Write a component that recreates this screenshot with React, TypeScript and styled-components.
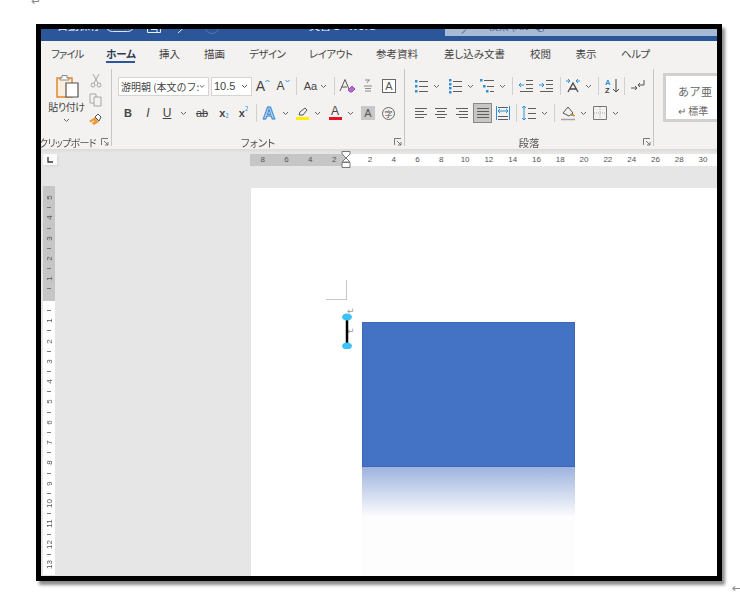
import React from "react";
import styled, { createGlobalStyle } from "styled-components";

const GlobalStyle = createGlobalStyle`
  html, body { margin: 0; padding: 0; background: #fff; }
  body { font-family: "Noto Sans CJK JP", "Liberation Sans", sans-serif; overflow: hidden; }
`;

const BLUE = "#2b579a";
const GREY = "#5f5e5d";
const ACCENT = "#2d8fd8";

const Screen = styled.div`
  width: 740px;
  height: 597px;
  overflow: hidden;
  display: flex;
  flex-direction: column;
`;

const TopMark = styled.div`
  height: 24px;
  flex: none;
  padding-left: 31px;
  overflow: hidden;
  display: flex;
  align-items: flex-start;
`;

const BottomMark = styled.div`
  display: flex;
  justify-content: flex-end;
  padding: 2px 0 0;
  margin-right: -2px;
`;

const Frame = styled.div`
  width: 676px;
  height: 547px;
  margin-left: 36px;
  border: 5px solid #000;
  box-shadow: 3px 4px 3px rgba(0, 0, 0, 0.45);
  display: flex;
  flex-direction: column;
  overflow: hidden;
  background: #e6e6e6;
  flex: none;
`;

const Soft = styled.div`
  filter: blur(0.35px);
  display: flex;
  flex-direction: column;
  height: 100%;
`;

const TitleBar = styled.div`
  height: 12px;
  flex: none;
  background: ${BLUE};
  display: flex;
  align-items: flex-start;
  overflow: hidden;
  color: #e8eef7;
  font-size: 11px;
  line-height: 14px;
`;

const TitleText = styled.span<{ $w: number; $ml: number }>`
  width: ${(p) => p.$w}px;
  margin-left: ${(p) => p.$ml}px;
  flex: none;
  margin-top: -11px;
  white-space: nowrap;
`;

const Toggle = styled.span`
  width: 30px;
  height: 15px;
  flex: none;
  margin-top: -12px;
  border: 1px solid #dfe6f1;
  border-radius: 8px;
  box-sizing: border-box;
`;

const QuickIcon = styled.svg<{ $ml: number }>`
  flex: none;
  margin-left: ${(p) => p.$ml}px;
`;

const SearchBox = styled.div`
  margin-left: auto;
  width: 272px;
  height: 7px;
  flex: none;
  background: #a6b9d5;
  color: #3e5f92;
  display: flex;
  overflow: hidden;
  padding-left: 16px;
  box-sizing: border-box;
  gap: 17px;
  font-size: 10.5px;
  line-height: 12px;
`;

const SearchText = styled.span`
  margin-top: -9px;
  white-space: nowrap;
`;

const Tabs = styled.nav`
  height: 28px;
  flex: none;
  box-sizing: border-box;
  background: #f3f2f1;
  display: flex;
  align-items: center;
  padding: 0 0 2px 10px;
  gap: 24px;
  font-size: 10.5px;
  font-feature-settings: "palt";
  color: #444;
`;

const Tab = styled.span<{ $w: number; $ls?: number; $active?: boolean }>`
  position: relative;
  width: ${(p) => p.$w}px;
  flex: none;
  text-align: center;
  white-space: nowrap;
  line-height: 16px;
  letter-spacing: ${(p) => p.$ls ?? 0}px;
  font-weight: ${(p) => (p.$active ? 700 : 400)};
  color: ${(p) => (p.$active ? "#2b3a55" : "#444")};
  &::after {
    content: "";
    display: ${(p) => (p.$active ? "block" : "none")};
    position: absolute;
    left: 0;
    right: 0;
    bottom: -1px;
    height: 2px;
    background: ${BLUE};
  }
`;

const Ribbon = styled.div`
  height: 80px;
  flex: none;
  background: #f3f2f1;
  display: flex;
`;

const Group = styled.section<{ $w: number; $line?: boolean }>`
  width: ${(p) => p.$w}px;
  flex: none;
  box-sizing: border-box;
  border-right: ${(p) => (p.$line ? "1px solid #c8c6c4" : "none")};
  margin-bottom: 3px;
  display: flex;
  flex-direction: column;
`;

const GroupBody = styled.div`
  flex: 1;
  min-height: 0;
`;

const GroupLabel = styled.div`
  height: 8px;
  flex: none;
  position: relative;
  display: flex;
  align-items: center;
  justify-content: center;
  font-size: 10.5px;
  color: #555;
  font-feature-settings: "palt";
  white-space: nowrap;
`;

const ClipName = styled.span`
  font-size: 10px;
  letter-spacing: -0.7px;
  margin-right: 17px;
`;

const Launcher = styled.svg`
  position: absolute;
  right: 2px;
  top: 0;
`;

const ClipBody = styled(GroupBody)`
  display: flex;
  padding: 4px 0 0 5px;
`;

const PasteCol = styled.div`
  width: 41px;
  display: flex;
  flex-direction: column;
  align-items: center;
  font-size: 10px;
  line-height: 13px;
  color: #444;
  font-feature-settings: "palt";
`;

const PasteLabel = styled.span`
  margin-top: 1px;
  letter-spacing: -0.4px;
  white-space: nowrap;
`;

const SmallCol = styled.div`
  display: flex;
  flex-direction: column;
  align-items: center;
  gap: 5px;
  margin-left: 1px;
`;

const ToolRows = styled(GroupBody)<{ $pl: number }>`
  padding: 7px 0 0 ${(p) => p.$pl}px;
  display: flex;
  flex-direction: column;
  gap: 7px;
`;

const Row = styled.div`
  display: flex;
  align-items: center;
  height: 20px;
`;

const FontBox = styled.div<{ $w: number; $ml?: number }>`
  width: ${(p) => p.$w}px;
  margin-left: ${(p) => p.$ml ?? 0}px;
  height: 19px;
  flex: none;
  box-sizing: border-box;
  background: #fff;
  border: 1px solid #d6d4d2;
  display: flex;
  align-items: center;
  justify-content: space-between;
  padding: 0 3px 0 2px;
  font-size: 10px;
  color: #444;
  overflow: hidden;
  white-space: nowrap;
`;

const FontName = styled.span`
  width: 78px;
  flex: none;
`;

const Tool = styled.div<{ $w: number; $ml?: number; $on?: boolean }>`
  width: ${(p) => p.$w}px;
  margin-left: ${(p) => p.$ml ?? 0}px;
  height: 20px;
  flex: none;
  box-sizing: border-box;
  display: flex;
  align-items: center;
  justify-content: center;
  background: ${(p) => (p.$on ? "#c6c6c6" : "transparent")};
  border: ${(p) => (p.$on ? "1px solid #8a8886" : "none")};
`;

const Glyph = styled.span<{ $size?: number; $color?: string; $bold?: boolean; $italic?: boolean; $under?: boolean; $strike?: boolean }>`
  font-family: "Liberation Sans", sans-serif;
  font-size: ${(p) => p.$size ?? 11}px;
  color: ${(p) => p.$color ?? "#444"};
  font-weight: ${(p) => (p.$bold ? 700 : 400)};
  font-style: ${(p) => (p.$italic ? "italic" : "normal")};
  text-decoration: ${(p) => (p.$under ? "underline" : p.$strike ? "line-through" : "none")};
  line-height: 1;
  white-space: nowrap;
`;

const OutlineA = styled.span`
  font-family: "Liberation Sans", sans-serif;
  font-size: 17px;
  font-weight: 700;
  line-height: 1;
  color: #d6e8f8;
  -webkit-text-stroke: 1px #2d7fd0;
`;

const Sub = styled.span<{ $up?: boolean }>`
  font-size: 6px;
  color: ${ACCENT};
  position: relative;
  top: ${(p) => (p.$up ? -5 : 2)}px;
`;

const Divider = styled.span<{ $l: number; $r: number }>`
  width: 1px;
  height: 18px;
  flex: none;
  background: #d2d0ce;
  margin: 0 ${(p) => p.$r}px 0 ${(p) => p.$l}px;
`;

const LetterBar = styled.span<{ $color: string }>`
  display: flex;
  flex-direction: column;
  align-items: center;
  font-family: "Liberation Sans", sans-serif;
  font-size: 12px;
  line-height: 11px;
  color: #444;
  &::after {
    content: "";
    width: 13px;
    height: 3px;
    background: ${(p) => p.$color};
  }
`;

const GreyA = styled.span`
  width: 14px;
  height: 14px;
  background: #c8c8c8;
  color: #555;
  font-family: "Liberation Sans", sans-serif;
  font-size: 11px;
  display: flex;
  align-items: center;
  justify-content: center;
`;

const BoxA = styled(GreyA)`
  background: #fff;
  border: 1px solid #666;
  box-sizing: border-box;
`;

const CircleChar = styled.span`
  width: 13px;
  height: 13px;
  box-sizing: border-box;
  border: 1px solid #666;
  border-radius: 50%;
  font-size: 8px;
  color: #555;
  display: flex;
  align-items: center;
  justify-content: center;
`;

const StylesBody = styled(GroupBody)`
  padding: 4px 0 0 9px;
  overflow: hidden;
`;

const StyleCard = styled.div`
  width: 70px;
  height: 49px;
  box-sizing: border-box;
  border: 3px solid #d2d0ce;
  background: #fff;
  display: flex;
  flex-direction: column;
  padding-left: 12px;
  color: #666;
  font-size: 10px;
`;

const StyleSample = styled.span`
  margin-top: 7px;
  font-size: 11px;
  line-height: 16px;
  letter-spacing: 0.5px;
`;

const StyleName = styled.span`
  margin-top: 5px;
  line-height: 14px;
  white-space: nowrap;
`;

const ShadowBand = styled.div`
  height: 4px;
  flex: none;
  background: linear-gradient(#dcdad8, #e6e6e6);
`;

const RulerRow = styled.div`
  height: 13px;
  flex: none;
  display: flex;
  align-items: flex-start;
  padding-top: 1px;
`;

const TabStop = styled.div`
  width: 14px;
  height: 11px;
  margin-left: 2px;
  flex: none;
  background: #fafafa;
  box-shadow: 1px 1px 2px #d5d5d5;
  display: flex;
  align-items: center;
  justify-content: center;
`;

const RulerPart = styled.div<{ $grey?: boolean; $w: number; $ml?: number }>`
  width: ${(p) => p.$w}px;
  margin-left: ${(p) => p.$ml ?? 0}px;
  flex: none;
  height: 11.5px;
  display: flex;
  justify-content: ${(p) => (p.$grey ? "flex-end" : "flex-start")};
  padding-left: ${(p) => (p.$grey ? 0 : 12)}px;
  box-sizing: border-box;
  background: ${(p) => (p.$grey ? "#c6c6c6" : "#fff")};
  position: relative;
`;

const RulerNum = styled.span`
  width: 23.8px;
  flex: none;
  text-align: center;
  font-family: "Liberation Sans", sans-serif;
  font-size: 8px;
  line-height: 11.5px;
  color: #555;
`;

const Indent = styled.svg`
  position: absolute;
  left: -5px;
  top: -3px;
`;

const Work = styled.div`
  flex: 1;
  min-height: 0;
  display: flex;
  padding-top: 19px;
`;

const VRuler = styled.div`
  width: 12px;
  margin-left: 2px;
  flex: none;
  height: 389px;
  display: flex;
  flex-direction: column;
`;

const VPart = styled.div<{ $grey?: boolean }>`
  flex: ${(p) => (p.$grey ? "none" : 1)};
  height: ${(p) => (p.$grey ? "114.5px" : "auto")};
  background: ${(p) => (p.$grey ? "#c6c6c6" : "#fff")};
  padding-top: ${(p) => (p.$grey ? 6.5 : 5)}px;
  box-sizing: border-box;
`;

const VCell = styled.div`
  height: 10.17px;
  display: flex;
  align-items: center;
  justify-content: center;
  font-family: "Liberation Sans", sans-serif;
  font-size: 8px;
  color: #555;
  white-space: nowrap;
`;

const VNum = styled.span`
  transform: rotate(-90deg);
  display: block;
`;

const VTick = styled.span`
  width: 4px;
  height: 1px;
  background: #777;
`;

const Page = styled.main`
  position: relative;
  margin: 2px 0 0 196px;
  flex: 1;
  background: #fff;
  padding: 134px 0 0 111px;
  overflow: hidden;
`;

const CropMark = styled.span`
  position: absolute;
  left: 75px;
  top: 92px;
  width: 20px;
  height: 19px;
  border-right: 1px solid #c8c8c8;
  border-bottom: 1px solid #c8c8c8;
`;

const ParaMark = styled.span<{ $top: number }>`
  position: absolute;
  left: 96px;
  top: ${(p) => p.$top}px;
  font-family: "DejaVu Sans", sans-serif;
  font-size: 9px;
  line-height: 8px;
  color: #9a9a9a;
`;

const Handle = styled.svg`
  position: absolute;
  left: 90px;
  top: 123px;
`;

const BlueRect = styled.div`
  width: 213px;
  height: 145px;
  box-sizing: border-box;
  background: #4472c4;
  border: 1px solid #3f68b3;
`;

const Reflection = styled.div`
  width: 213px;
  height: 109px;
  background: linear-gradient(#9db3de, #c9d5ec 21%, #fdfdfd 46%);
`;

const Return = styled.span<{ $top?: number }>`
  font-family: "DejaVu Sans", sans-serif;
  font-size: 12px;
  line-height: 10px;
  margin-top: ${(p) => p.$top ?? 0}px;
  color: #8a8a8a;
`;

const Ico = ({ children, w = 16, h = 16 }: { children: React.ReactNode; w?: number; h?: number }) => (
  <svg width={w} height={h} viewBox={`0 0 ${w} ${h}`} fill="none" stroke={GREY} strokeWidth="1">
    {children}
  </svg>
);

const Chev = ({ w, ml }: { w: number; ml?: number }) => (
  <Tool $w={w} $ml={ml}>
    <svg width="7" height="5" viewBox="0 0 7 5" fill="none" stroke="#666" strokeWidth="1">
      <path d="M1 1l2.500 2.500L6 1" />
    </svg>
  </Tool>
);

const Lines = ({ rows }: { rows: [number, number, number][] }) => (
  <>
    {rows.map(([x1, x2, y]) => (
      <path key={`${x1}-${y}`} d={`M${x1} ${y + 0.5}H${x2}`} />
    ))}
  </>
);

const Dots = ({ ys, x = 2.5 }: { ys: number[]; x?: number }) => (
  <>
    {ys.map((y) => (
      <rect key={y} x={x - 1} y={y - 1} width="2.500" height="2.500" fill={ACCENT} stroke="none" />
    ))}
  </>
);

const LauncherIcon = () => (
  <Launcher width="8" height="8" viewBox="0 0 8 8" fill="none" stroke="#777" strokeWidth="1">
    <path d="M0.500 7V0.500H7M3 3l4 4M7 4v3H4" />
  </Launcher>
);

const HRulerLeft = ["8", "6", "4", "2"];
const HRulerRight = Array.from({ length: 15 }, (_, i) => String((i + 1) * 2));

const vLabels = (nums: (string | null)[]) =>
  nums.map((n, i) => <VCell key={i}>{n ? <VNum>{n}</VNum> : <VTick />}</VCell>);

const greyLabels = ["5", null, "4", null, "3", null, "2", null, "1", null];
const whiteLabels: (string | null)[] = [null];
for (let i = 1; i <= 13; i++) {
  whiteLabels.push(String(i));
  if (i < 13) whiteLabels.push(null);
}

export default function App() {
  return (
    <Screen>
      <GlobalStyle />
      <TopMark>
        <Return $top={-4}>↵</Return>
      </TopMark>
      <Frame>
        <Soft>
          <TitleBar>
            <TitleText $w={48} $ml={16}>自動保存</TitleText>
            <Toggle />
            <QuickIcon $ml={12} width="14" height="4" viewBox="0 3 14 4" fill="none" stroke="#e8eef7">
              <path d="M0.500 0V6.500H13.500V0M4 3.500H10V6.500" />
            </QuickIcon>
            <QuickIcon $ml={16} width="10" height="5" viewBox="0 2 10 5" fill="none" stroke="#e8eef7">
              <path d="M1 6L7 0.500" />
            </QuickIcon>
            <QuickIcon $ml={18} width="14" height="5" viewBox="0 0 14 5" fill="none" stroke="#5678ab">
              <path d="M1 0a6 4.500 0 0 0 12 0" />
            </QuickIcon>
            <TitleText $w={90} $ml={90}>文書 1 - Word</TitleText>
            <SearchBox>
              <svg width="10" height="5" viewBox="0 0 10 5" fill="none" stroke="#3e5f92">
                <path d="M1 4.500L5 0.500" />
              </svg>
              <SearchText>検索 (Alt+Q)</SearchText>
            </SearchBox>
          </TitleBar>
          <Tabs>
            <Tab $w={31} $ls={-1}>ファイル</Tab>
            <Tab $w={29} $active>ホーム</Tab>
            <Tab $w={21}>挿入</Tab>
            <Tab $w={21}>描画</Tab>
            <Tab $w={36} $ls={-0.5}>デザイン</Tab>
            <Tab $w={42} $ls={-0.5}>レイアウト</Tab>
            <Tab $w={44}>参考資料</Tab>
            <Tab $w={63}>差し込み文書</Tab>
            <Tab $w={21}>校閲</Tab>
            <Tab $w={22}>表示</Tab>
            <Tab $w={28} $ls={-0.5}>ヘルプ</Tab>
          </Tabs>
          <Ribbon>
            <Group $w={71} $line>
              <ClipBody>
                <PasteCol>
                  <svg width="24" height="26" viewBox="0 0 24 26" fill="none">
                    <path d="M2 5h15v19H2z" fill="#fbeede" stroke="#e08a2c" strokeWidth="1.500" />
                    <path d="M7 5V2.500h5V5h2v2H5V5z" fill="#fff" stroke="#8a8886" />
                    <path d="M11 10h12v14H11z" fill="#fff" stroke="#555" strokeWidth="1.200" />
                  </svg>
                  <PasteLabel>貼り付け</PasteLabel>
                  <svg width="7" height="5" viewBox="0 0 7 5" fill="none" stroke="#666" style={{ marginTop: 5 }}>
                    <path d="M1 1l2.500 2.500L6 1" />
                  </svg>
                </PasteCol>
                <SmallCol>
                  <svg width="12" height="15" viewBox="0 0 12 15" fill="none" stroke="#a6a6a6">
                    <path d="M3 1l5 9M9 1L4 10" />
                    <circle cx="3" cy="12" r="2" />
                    <circle cx="9" cy="12" r="2" />
                  </svg>
                  <svg width="14" height="14" viewBox="0 0 14 14" fill="#f3f2f1" stroke="#a6a6a6">
                    <path d="M1 1h6v9H1z" />
                    <path d="M5 4h7v9H5z" />
                  </svg>
                  <svg width="15" height="14" viewBox="0 0 15 14">
                    <path d="M1 9l6-4 4 5-5 3z" fill="#eb9a3e" />
                    <path d="M7 5l3-3 3 3-2 4z" fill="#fff" stroke="#555" />
                    <path d="M3 11l3-2" stroke="#fff" />
                  </svg>
                </SmallCol>
              </ClipBody>
              <GroupLabel>
                <ClipName>クリップボード</ClipName>
                <LauncherIcon />
              </GroupLabel>
            </Group>

            <Group $w={293} $line>
              <ToolRows $pl={6}>
                <Row>
                  <FontBox $w={91}>
                    <FontName>游明朝 (本文のフ:</FontName>
                    <svg width="7" height="5" viewBox="0 0 7 5" fill="none" stroke="#555"><path d="M1 1l2.500 2.500L6 1" /></svg>
                  </FontBox>
                  <FontBox $w={41} $ml={2}>
                    <Glyph $size={11}>10.5</Glyph>
                    <svg width="7" height="5" viewBox="0 0 7 5" fill="none" stroke="#555"><path d="M1 1l2.500 2.500L6 1" /></svg>
                  </FontBox>
                  <Tool $w={20} $ml={1}>
                    <Glyph $size={14}>A</Glyph>
                    <svg width="5" height="6" viewBox="0 0 5 6" fill="none" stroke={ACCENT} style={{ marginBottom: 8 }}><path d="M0.500 3l2-2 2 2" /></svg>
                  </Tool>
                  <Tool $w={20}>
                    <Glyph $size={12}>A</Glyph>
                    <svg width="5" height="6" viewBox="0 0 5 6" fill="none" stroke={ACCENT} style={{ marginBottom: 8 }}><path d="M0.500 1l2 2 2-2" /></svg>
                  </Tool>
                  <Divider $l={3} $r={3} />
                  <Tool $w={31}>
                    <Glyph $size={11}>Aa</Glyph>
                    <svg width="7" height="5" viewBox="0 0 7 5" fill="none" stroke="#666" style={{ marginLeft: 3 }}><path d="M1 1l2.500 2.500L6 1" /></svg>
                  </Tool>
                  <Divider $l={3} $r={3} />
                  <Tool $w={19}>
                    <svg width="17" height="16" viewBox="0 0 17 16" fill="none">
                      <path d="M1 13L6 1.500 10 11" stroke="#555" />
                      <path d="M3 9h5" stroke="#555" />
                      <path d="M9 12l4-4 3 3-3 3h-2z" fill="#b56ccb" stroke="#9a4db5" />
                    </svg>
                  </Tool>
                  <Tool $w={22}>
                    <Ico w={10} h={14}>
                      <path d="M2 1h5M6 1L4 4M1 7h8M2 9.500h6M2 12h6" stroke="#8a8a8a" />
                    </Ico>
                  </Tool>
                  <Tool $w={20}>
                    <BoxA>A</BoxA>
                  </Tool>
                </Row>
                <Row>
                  <Tool $w={20}><Glyph $bold>B</Glyph></Tool>
                  <Tool $w={20}><Glyph $italic $size={12}>I</Glyph></Tool>
                  <Tool $w={18}><Glyph $under $size={12}>U</Glyph></Tool>
                  <Chev w={14} />
                  <Tool $w={24}><Glyph $strike $size={11}>ab</Glyph></Tool>
                  <Tool $w={20}><Glyph $bold>x</Glyph><Sub>2</Sub></Tool>
                  <Tool $w={19}><Glyph $bold>x</Glyph><Sub $up>2</Sub></Tool>
                  <Divider $l={3} $r={3} />
                  <Tool $w={18}><OutlineA>A</OutlineA></Tool>
                  <Chev w={14} />
                  <Tool $w={20}>
                    <LetterBar $color="#ffef00">
                      <svg width="11" height="10" viewBox="0 0 11 10" fill="none" stroke="#555"><path d="M2 8l1-3 5-4 2 2-4 5z" /></svg>
                    </LetterBar>
                  </Tool>
                  <Chev w={10} />
                  <Tool $w={20} $ml={3}><LetterBar $color="#e81123">A</LetterBar></Tool>
                  <Chev w={10} />
                  <Tool $w={20} $ml={3}><GreyA>A</GreyA></Tool>
                  <Tool $w={21}><CircleChar>字</CircleChar></Tool>
                </Row>
              </ToolRows>
              <GroupLabel>
                フォント
                <LauncherIcon />
              </GroupLabel>
            </Group>

            <Group $w={249} $line>
              <ToolRows $pl={6}>
                <Row>
                  <Tool $w={20}>
                    <Ico><Dots ys={[3, 8, 13]} x={3} /><Lines rows={[[6, 15, 3], [6, 15, 8], [6, 15, 13]]} /></Ico>
                  </Tool>
                  <Chev w={10} />
                  <Tool $w={20} $ml={4}>
                    <Ico><Dots ys={[2, 6, 10, 14]} x={3} /><Lines rows={[[6, 15, 3], [6, 15, 8], [6, 15, 13]]} /></Ico>
                  </Tool>
                  <Chev w={10} />
                  <Tool $w={20} $ml={2}>
                    <Ico><Dots ys={[2]} x={2} /><Dots ys={[8]} x={5} /><Dots ys={[13]} x={8} /><Lines rows={[[5, 15, 2], [8, 15, 8], [11, 15, 13]]} /></Ico>
                  </Tool>
                  <Chev w={10} />
                  <Divider $l={5} $r={3} />
                  <Tool $w={20}>
                    <Ico>
                      <Lines rows={[[8, 15, 2], [8, 15, 6], [8, 15, 10], [2, 15, 13]]} />
                      <path d="M6 7H1M3 5L1 7l2 2" stroke={ACCENT} />
                    </Ico>
                  </Tool>
                  <Tool $w={20}>
                    <Ico>
                      <Lines rows={[[8, 15, 2], [8, 15, 6], [8, 15, 10], [2, 15, 13]]} />
                      <path d="M1 7h5M4 5l2 2-2 2" stroke={ACCENT} />
                    </Ico>
                  </Tool>
                  <Divider $l={4} $r={2} />
                  <Tool $w={20}>
                    <Ico>
                      <path d="M3 14L8 5l5 9M5 11h6" stroke="#444" strokeWidth="1.300" />
                      <path d="M1 3h4M3 1l2 2-2 2M15 3h-4M13 1l-2 2 2 2" stroke={ACCENT} />
                    </Ico>
                  </Tool>
                  <Chev w={10} />
                  <Divider $l={5} $r={3} />
                  <Tool $w={20}>
                    <Ico>
                      <text x="1" y="7" fontSize="7.500" fontWeight="700" fill={ACCENT} stroke="none" fontFamily="Liberation Sans">A</text>
                      <text x="1" y="15" fontSize="7.500" fontWeight="700" fill="#444" stroke="none" fontFamily="Liberation Sans">Z</text>
                      <path d="M12 1v13M9 11l3 3 3-3" stroke="#444" />
                    </Ico>
                  </Tool>
                  <Divider $l={2} $r={3} />
                  <Tool $w={20}>
                    <Ico>
                      <path d="M14 2v5H8M10 5L8 7l2 2" stroke="#555" />
                      <path d="M1 10h6M5 8l2 2-2 2" stroke="#555" />
                    </Ico>
                  </Tool>
                </Row>
                <Row>
                  <Tool $w={20}><Ico><Lines rows={[[2, 14, 3], [2, 11, 6], [2, 14, 9], [2, 11, 12]]} /></Ico></Tool>
                  <Tool $w={20}><Ico><Lines rows={[[2, 14, 3], [4, 12, 6], [2, 14, 9], [4, 12, 12]]} /></Ico></Tool>
                  <Tool $w={20} $ml={1}><Ico><Lines rows={[[2, 14, 3], [5, 14, 6], [2, 14, 9], [5, 14, 12]]} /></Ico></Tool>
                  <Tool $w={19} $ml={1} $on>
                    <Ico><Lines rows={[[2, 14, 3], [2, 14, 6], [2, 14, 9], [2, 14, 12]]} /></Ico>
                  </Tool>
                  <Tool $w={20} $ml={1}>
                    <Ico>
                      <path d="M1.500 1v14M14.500 1v14" stroke={ACCENT} />
                      <Lines rows={[[3, 13, 2], [3, 13, 11], [3, 13, 14]]} />
                      <path d="M3 6h10M5 4L3 6l2 2M11 4l2 2-2 2" stroke={ACCENT} />
                    </Ico>
                  </Tool>
                  <Divider $l={3} $r={2} />
                  <Tool $w={20}>
                    <Ico>
                      <Lines rows={[[7, 15, 3], [7, 15, 8], [7, 15, 13]]} />
                      <path d="M3 1v14M1 3l2-2 2 2M1 13l2 2 2-2" stroke={ACCENT} />
                    </Ico>
                  </Tool>
                  <Chev w={10} />
                  <Divider $l={5} $r={3} />
                  <Tool $w={20}>
                    <Ico>
                      <path d="M3 8l5-6 5 6-4 3z" stroke="#555" fill="#f3f2f1" />
                      <path d="M13 9l1.500 2-3-0.500z" fill="#e08a2c" stroke="#e08a2c" />
                      <path d="M1 14.500h14" stroke="#a5a5a5" strokeWidth="1.500" />
                    </Ico>
                  </Tool>
                  <Chev w={10} />
                  <Tool $w={20} $ml={2}>
                    <Ico>
                      <path d="M1.500 1.500h13v13h-13z" stroke="#777" />
                      <path d="M8 2v12M2 8h12" stroke="#aaa" strokeDasharray="1 1" />
                    </Ico>
                  </Tool>
                  <Chev w={10} $ml={1} />
                </Row>
              </ToolRows>
              <GroupLabel>
                段落
                <LauncherIcon />
              </GroupLabel>
            </Group>

            <Group $w={63}>
              <StylesBody>
                <StyleCard>
                  <StyleSample>あア亜</StyleSample>
                  <StyleName>↵ 標準</StyleName>
                </StyleCard>
              </StylesBody>
            </Group>
          </Ribbon>
          <ShadowBand />
          <RulerRow>
            <TabStop>
              <svg width="6" height="6" viewBox="0 0 6 6" fill="none" stroke="#333" strokeWidth="1.300">
                <path d="M1 0v5h5" />
              </svg>
            </TabStop>
            <RulerPart $grey $w={96} $ml={193}>
              {HRulerLeft.map((n) => (
                <RulerNum key={n}>{n}</RulerNum>
              ))}
            </RulerPart>
            <RulerPart $w={371}>
              <Indent width="10" height="18" viewBox="0 0 10 18" fill="#fff" stroke="#777">
                <path d="M1 0.500h8V3L5 7 1 3zM5 7l4 4H1zM1 11.500h8v5H1z" />
              </Indent>
              {HRulerRight.map((n) => (
                <RulerNum key={n}>{n}</RulerNum>
              ))}
            </RulerPart>
          </RulerRow>
          <Work>
            <VRuler>
              <VPart $grey>{vLabels(greyLabels)}</VPart>
              <VPart>{vLabels(whiteLabels)}</VPart>
            </VRuler>
            <Page>
              <CropMark />
              <ParaMark $top={119}>↵</ParaMark>
              <ParaMark $top={139}>↵</ParaMark>
              <Handle width="12" height="38" viewBox="0 0 12 38">
                <path d="M6 4v30" stroke="#000" strokeWidth="2.500" />
                <ellipse cx="6" cy="6" rx="5" ry="3.500" fill="#3cc3f5" />
                <ellipse cx="6" cy="35" rx="5" ry="3.500" fill="#3cc3f5" />
              </Handle>
              <BlueRect />
              <Reflection />
            </Page>
          </Work>
        </Soft>
      </Frame>
      <BottomMark>
        <Return>←</Return>
      </BottomMark>
    </Screen>
  );
}
